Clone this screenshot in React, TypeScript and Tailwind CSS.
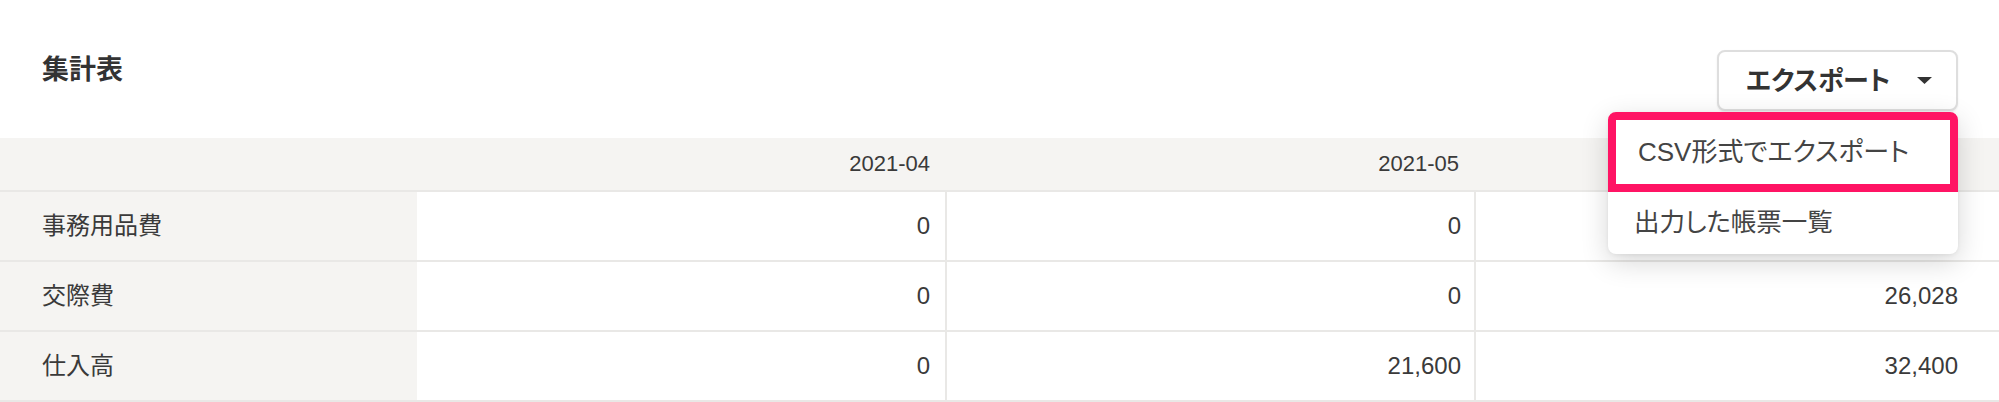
import React from "react";

type Row = { label: string; values: string[] };

const months = ["2021-04", "2021-05", ""];

const rows: Row[] = [
  { label: "事務用品費", values: ["0", "0", ""] },
  { label: "交際費", values: ["0", "0", "26,028"] },
  { label: "仕入高", values: ["0", "21,600", "32,400"] },
];

function Caret() {
  return (
    <svg width="15" height="7" viewBox="0 0 15 7" aria-hidden="true">
      <path d="M0 0 L15 0 L7.5 7 Z" fill="#333333" />
    </svg>
  );
}

function ExportMenu() {
  return (
    <div className="relative">
      <button
        type="button"
        className="flex h-[61px] w-[241px] items-center justify-between rounded-[8px] border-2 border-[#dedede] bg-white pl-[27px] pr-[24px] shadow-[0_1px_2px_rgba(0,0,0,0.08)]"
      >
        <span className="text-[26px] font-bold leading-none text-[#333333] [font-feature-settings:'palt']">
          エクスポート
        </span>
        <Caret />
      </button>
      <div className="absolute right-0 top-[62px] z-10 w-[350px] rounded-[8px] bg-white shadow-[0_8px_28px_rgba(0,0,0,0.16),0_1px_4px_rgba(0,0,0,0.06)]">
        <div className="flex h-[80px] items-center rounded-t-[8px] border-[8px] border-[#ff1464] pl-[22px]">
          <span className="text-[26px] leading-none text-[#444444] [font-feature-settings:'palt']">
            CSV形式でエクスポート
          </span>
        </div>
        <div className="flex h-[62px] items-center pl-[26px]">
          <span className="text-[25.5px] leading-none text-[#444444] [font-feature-settings:'palt']">
            出力した帳票一覧
          </span>
        </div>
      </div>
    </div>
  );
}

export default function App() {
  return (
    <div className="h-[402px] w-full overflow-hidden bg-white font-['Liberation_Sans','Noto_Sans_CJK_JP',sans-serif] text-[#3a3a3a]">
      <div className="flex h-[138px] items-start justify-between pl-[42px] pr-[41px] pt-[50px]">
        <h2 className="mt-[5px] text-[27px] font-bold leading-[30px] text-[#333333]">集計表</h2>
        <ExportMenu />
      </div>

      <div className="grid grid-cols-[417px_528px_529px_1fr]">
        {/* header */}
        <div className="h-[54px] border-b-2 border-[#e9e8e6] bg-[#f5f4f2]" />
        {months.map((m, i) => (
          <div
            key={i}
            className={`flex h-[54px] items-center justify-end border-b-2 border-[#e9e8e6] bg-[#f5f4f2] text-[22px] leading-none ${
              i === 2 ? "pr-[41px]" : "pr-[15px]"
            }`}
          >
            {m}
          </div>
        ))}

        {/* body */}
        {rows.map((r) => (
          <React.Fragment key={r.label}>
            <div className="flex h-[70px] items-center border-b-2 border-[#e9e8e6] bg-[#f5f4f2] pl-[42px] text-[24px] leading-none">
              {r.label}
            </div>
            {r.values.map((v, i) => (
              <div
                key={i}
                className={`flex h-[70px] items-center justify-end border-b-2 border-[#e9e8e6] text-[24px] leading-none ${
                  i === 0 ? "pr-[15px]" : "border-l-2 pr-[13px]"
                } ${i === 2 ? "pr-[41px]" : ""}`}
              >
                {v}
              </div>
            ))}
          </React.Fragment>
        ))}
      </div>
    </div>
  );
}
